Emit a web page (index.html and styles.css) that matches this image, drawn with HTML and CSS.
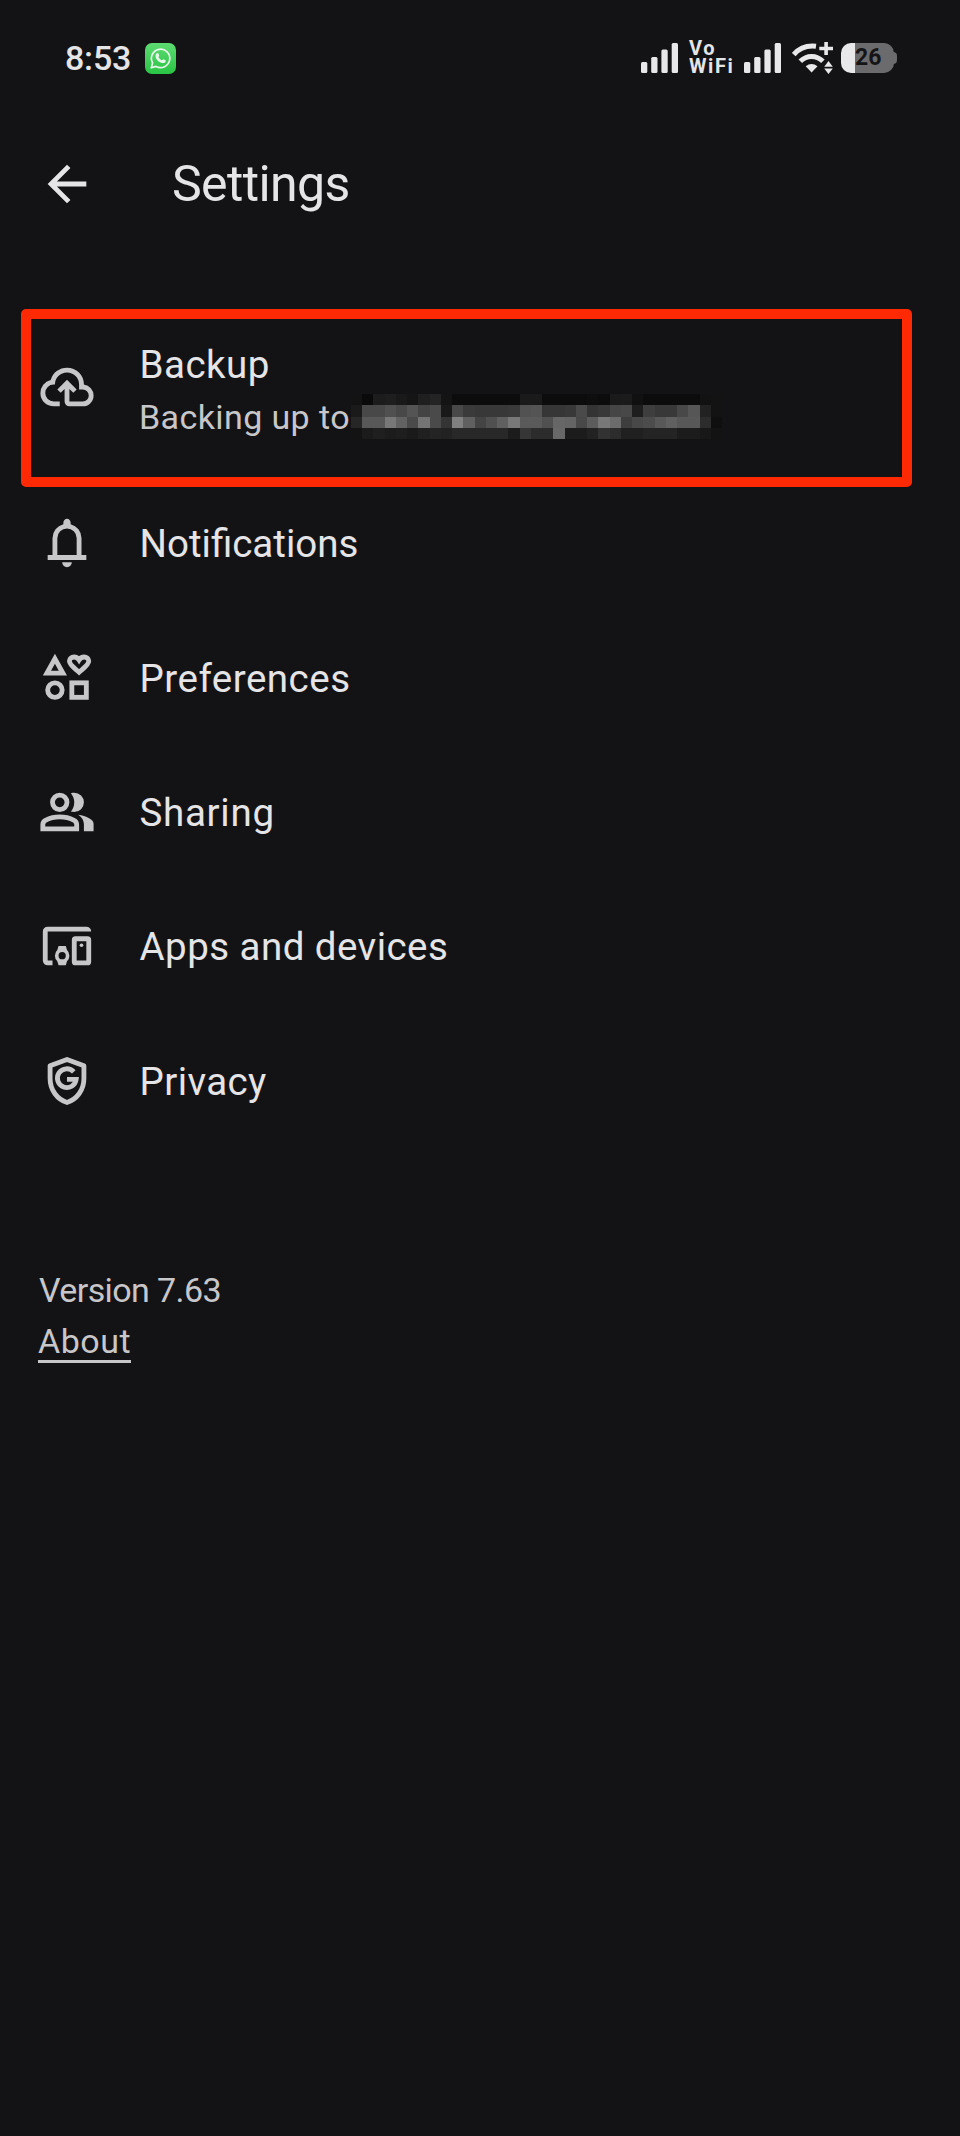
FILE: index.html
```
<!DOCTYPE html>
<html lang="en">
<head>
    <meta charset="UTF-8">
    <meta name="viewport" content="width=device-width, initial-scale=1.0">
    <title>Settings</title>
    <link rel="stylesheet" href="styles.css">
</head>
<body>
    <div class="status-bar">
        <span class="clock">8:53</span>
        <svg class="whatsapp" viewBox="0 0 31 31">
            <defs>
                <linearGradient id="green" x1="0" y1="0" x2="0" y2="1">
                    <stop offset="0" stop-color="#5ddb72"/>
                    <stop offset="1" stop-color="#29c445"/>
                </linearGradient>
            </defs>
            <rect width="31" height="31" rx="7" fill="url(#green)"/>
            <path d="M6.3 24.8l1.3-4.9a9.2 9.2 0 1 1 3.5 3.5z" fill="none" stroke="#e8f7ea" stroke-width="1.7" stroke-linejoin="round"/>
            <path d="M11.6 10.5c.7-.7 1.5-.5 1.8.1l.8 1.8c.2.6-.8 1.3-.7 1.7.7 1.5 1.9 2.6 3.4 3.2.5.1 1-1.2 1.6-1l2 1c.7.5.1 2-.9 2.5-3 1.4-9-2.5-9.1-6.9 0-1 .5-1.9 1.1-2.4z" fill="#e8f7ea"/>
        </svg>
        <div class="status-icons">
            <svg class="signal" viewBox="0 0 38 30">
                <rect x="0" y="19" width="6.3" height="11" rx="1.5"/>
                <rect x="10.2" y="14" width="6.3" height="16" rx="1.5"/>
                <rect x="20.4" y="6.5" width="6.3" height="23.5" rx="1.5"/>
                <rect x="30.7" y="0" width="6.3" height="30" rx="1.5"/>
            </svg>
            <div class="vowifi"><span>Vo</span><span>WiFi</span></div>
            <svg class="signal" viewBox="0 0 38 30">
                <rect x="0" y="19" width="6.3" height="11" rx="1.5"/>
                <rect x="10.2" y="14" width="6.3" height="16" rx="1.5"/>
                <rect x="20.4" y="6.5" width="6.3" height="23.5" rx="1.5"/>
                <rect x="30.7" y="0" width="6.3" height="30" rx="1.5"/>
            </svg>
            <svg class="wifi" viewBox="0 0 42 34">
                <path d="M1.7 13.5C7.5 6.8 15.5 4.2 24 5.2M8.3 20.3c6.5-6.5 16-6.5 22.6 0" fill="none" stroke="#e8e8ea" stroke-width="5"/>
                <path d="M13.7 25.2q5.9-4.4 11.8 0l-5.9 6.2z"/>
                <path d="M32.3 1h3.6v4.7H41v3.5h-5.1V14h-3.6V9.2h-5V5.7h5zM36.5 20l4.3 5.7h-8.6zM32.2 27.5h8.6l-4.3 5.5z"/>
            </svg>
            <div class="battery"><span>26</span></div>
        </div>
    </div>

    <div class="header">
        <svg class="icon back" viewBox="0 0 24 24"><path d="M7.825 13l5.6 5.6L12 20l-8-8 8-8 1.425 1.4-5.6 5.6H20v2z"/></svg>
        <h1>Settings</h1>
    </div>

    <div class="menu">
        <div class="item backup">
            <svg class="icon" viewBox="0 0 24 24"><path d="M9 20H6.5q-2.275 0-3.887-1.575T1 14.575q0-1.95 1.175-3.475T5.25 9.15q.625-2.3 2.5-3.725T12 4q2.925 0 4.963 2.038T19 11q1.725.2 2.863 1.488T23 15.5q0 1.875-1.312 3.188T18.5 20H13q-.825 0-1.412-.587T11 18v-5.15L9.4 14.4 8 13l4-4 4 4-1.4 1.4-1.6-1.55V18h5.5q1.05 0 1.775-.725T21 15.5t-.725-1.775T18.5 13H17v-2q0-2.075-1.463-3.537T12 6 8.463 7.463 7 11h-.5q-1.45 0-2.475 1.025T3 14.5t1.025 2.475T6.5 18H9z"/></svg>
            <div class="text">
                <span class="label l-backup">Backup</span>
                <div class="account">
                    <span>Backing up to</span>
                    <svg class="mosaic" id="mosaic" viewBox="0 0 33 4" preserveAspectRatio="none" shape-rendering="crispEdges"></svg>
                </div>
            </div>
        </div>
        <div class="item">
            <svg class="icon" viewBox="0 0 24 24"><path d="M4 19v-2h2v-7q0-2.075 1.25-3.687T10.5 4.2v-.7q0-.625.438-1.062T12 2t1.063.438.437 1.062v.7q2 .5 3.25 2.113T18 10v7h2v2zm8 3q-.825 0-1.412-.587T10 20h4q0 .825-.587 1.413T12 22m-4-5h8v-7q0-1.65-1.175-2.825T12 6 9.175 7.175 8 10z"/></svg>
            <span class="label l-notifications">Notifications</span>
        </div>
        <div class="item">
            <svg class="icon" viewBox="0 0 24 24">
                <path fill-rule="evenodd" d="M2 11l5-9 5 9zM5.4 9h3.2L7 6.1z"/>
                <g class="line">
                    <path d="M17 9.6c-1.8-1.6-4-3-4-4.6 0-1.1.9-1.7 1.9-1.7.9 0 1.6.4 2.1 1.2.5-.8 1.2-1.2 2.1-1.2 1 0 1.9.6 1.9 1.7 0 1.6-2.2 3-4 4.6z"/>
                    <circle cx="7" cy="17" r="3"/>
                    <rect x="14" y="14" width="6" height="6"/>
                </g>
            </svg>
            <span class="label l-preferences">Preferences</span>
        </div>
        <div class="item">
            <svg class="icon" viewBox="0 0 24 24">
                <circle class="line" cx="9" cy="8" r="3"/>
                <path fill-rule="evenodd" d="M1 20v-2.8q0-.85.44-1.56T2.6 14.55Q4.15 13.78 5.75 13.39T9 13t3.25.39 3.15 1.16q.73.38 1.16 1.09T17 17.2V20zM3 18h12v-.8q0-.5-.5-.85Q12 15 9 15t-5.5 1.35Q3 16.7 3 17.2z"/>
                <path d="M19 20v-3q0-1.1-.612-2.113T16.65 13.15q1.275.15 2.4.513t2.1.887q.9.5 1.375 1.112T23 17v3zM19 8q0 1.65-1.175 2.825T15 12q-.275 0-.7-.062T13.6 11.8q.675-.8 1.038-1.775T15 8t-.362-2.025T13.6 4.2q.35-.125.7-.163T15 4q1.65 0 2.825 1.175T19 8"/>
            </svg>
            <span class="label l-sharing">Sharing</span>
        </div>
        <div class="item">
            <svg class="icon" viewBox="0 0 24 24">
                <path d="M4 20q-.83 0-1.41-.59T2 18V6q0-.83.59-1.41T4 4h16q.83 0 1.41.59T22 6H4v12h2v2z"/>
                <path fill-rule="evenodd" d="M8.5 20l-.5-1.7q-1-.9-1-2.3t1-2.3l.5-1.7h3l.5 1.7q1 .9 1 2.3t-1 2.3l-.5 1.7zM10 17.5a1.5 1.5 0 1 0 0-3 1.5 1.5 0 0 0 0 3z"/>
                <rect class="line" x="15" y="9" width="6" height="10" rx=".5"/>
                <circle cx="18" cy="11.7" r=".75"/>
            </svg>
            <span class="label l-apps">Apps and devices</span>
        </div>
        <div class="item">
            <svg class="icon" viewBox="0 0 24 24">
                <g class="line">
                    <path stroke-linejoin="round" d="M12 3.1l7 2.6V11q0 3.6-2 6.3T12 20.9q-3-.9-5-3.6T5 11V5.7z"/>
                    <path d="M14.8 8.2a3.9 3.9 0 1 0 1 3.1H12"/>
                </g>
            </svg>
            <span class="label l-privacy">Privacy</span>
        </div>
    </div>

    <div class="footer">
        <div class="version">Version 7.63</div>
        <a class="about">About</a>
    </div>

    <script>
        // Grey levels of the hidden account name, one hex pair per cell
        const rows = [
            '130a1c1e19151f24140c0c0c0c0c0c1a1a0c0c0c0c0e0c1a1b110c0c0c0c0c1213',
            '1a4848504854444a19483a3838383a52543636384a343846481e3e383848562213',
            '26585878624a744a348060445060785a5a506664485c786c3e484c586058582c0f',
            '131b1f1c1e1a20242228282828281c362c2c681c1c22322c20202424241c1c1813'
        ];
        let cells = '';
        rows.forEach((row, y) => {
            row.match(/../g).forEach((v, x) => {
                cells += `<rect x="${x}" y="${y}" width="1" height="1" fill="#${v}${v}${v}"/>`;
            });
        });
        document.getElementById('mosaic').innerHTML = cells;
    </script>
</body>
</html>
```
FILE: styles.css
```
* {
    box-sizing: border-box;
}
body {
    margin: 0;
    width: 960px;
    height: 2136px;
    background-color: #131315;
    color: #e5e4e7;
    font-family: Roboto, "Open Sans", sans-serif;
    overflow: hidden;
}
svg {
    display: block;
    flex: none;
    fill: #e8e8ea;
}
.status-bar {
    display: flex;
    align-items: center;
    height: 116px;
    padding: 0 63px 0 65px;
}
.clock {
    width: 80px;
    font-size: 34px;
    font-weight: 500;
    line-height: 40px;
    letter-spacing: -0.2px;
}
.whatsapp {
    width: 31px;
    height: 31px;
}
.status-icons {
    display: flex;
    align-items: center;
    margin-left: auto;
}
.signal {
    width: 38px;
    height: 30px;
}
.vowifi {
    display: flex;
    flex-direction: column;
    width: 55px;
    margin: -2px 0 0 10px;
    font-size: 20px;
    font-weight: 700;
    line-height: 18px;
    letter-spacing: 1.6px;
}
.wifi {
    width: 42px;
    height: 34px;
    margin: 0 7px 0 10px;
}
.battery {
    position: relative;
    width: 53px;
    height: 30px;
    margin-right: 3px;
    border-radius: 10px;
    background: linear-gradient(to right, #e8e8ea 14px, #6b6b6d 14px);
    color: #151517;
    font-size: 23px;
    font-weight: 700;
    line-height: 30px;
    padding-left: 14px;
}
.battery::after {
    content: "";
    position: absolute;
    right: -3px;
    top: 9px;
    width: 4px;
    height: 12px;
    border-radius: 0 4px 4px 0;
    background: #6b6b6d;
}
.icon {
    width: 58px;
    height: 58px;
    fill: #c7c6c9;
}
.line {
    fill: none;
    stroke: #c7c6c9;
    stroke-width: 2;
}
.header {
    display: flex;
    align-items: center;
    height: 136px;
    padding-left: 38px;
}
.back {
    fill: #e5e4e7;
}
h1 {
    margin: 0 0 0 76px;
    font-size: 50px;
    font-weight: 400;
    line-height: 60px;
    letter-spacing: -0.6px;
}
.menu {
    padding-top: 57px;
}
.item {
    display: flex;
    align-items: center;
    height: 134.4px;
    padding-left: 38px;
}
.label {
    margin-left: 43.5px;
    padding-top: 2px;
    font-size: 38.5px;
    line-height: 46px;
}
.l-backup {
    letter-spacing: 0.5px;
}
.l-preferences {
    letter-spacing: 0.5px;
}
.l-sharing {
    letter-spacing: 0.7px;
}
.l-apps {
    letter-spacing: 0.45px;
}
.l-privacy {
    letter-spacing: 0.4px;
}
.backup {
    width: 891px;
    height: 178px;
    margin: 0 0 -11px 21px;
    padding: 0 0 22px 7px;
    border: 10px solid #ff2a04;
    border-radius: 5px;
}
.text {
    display: flex;
    flex-direction: column;
    padding-top: 5px;
}
.account {
    display: flex;
    align-items: center;
    height: 46px;
    margin: 6px 0 0 43px;
    color: #c7c6c9;
    font-size: 34px;
    letter-spacing: 0.4px;
}
.account span {
    width: 211.5px;
    white-space: nowrap;
}
.mosaic {
    width: 371px;
    height: 45px;
}
.footer {
    padding: 117px 0 0 38px;
    color: #c7c6c9;
    font-size: 34px;
    line-height: 51px;
}
.version {
    padding-left: 1px;
    letter-spacing: -0.6px;
}
.about {
    display: inline-block;
    line-height: 38px;
    letter-spacing: 0.5px;
    border-bottom: 3px solid #c7c6c9;
}
```
